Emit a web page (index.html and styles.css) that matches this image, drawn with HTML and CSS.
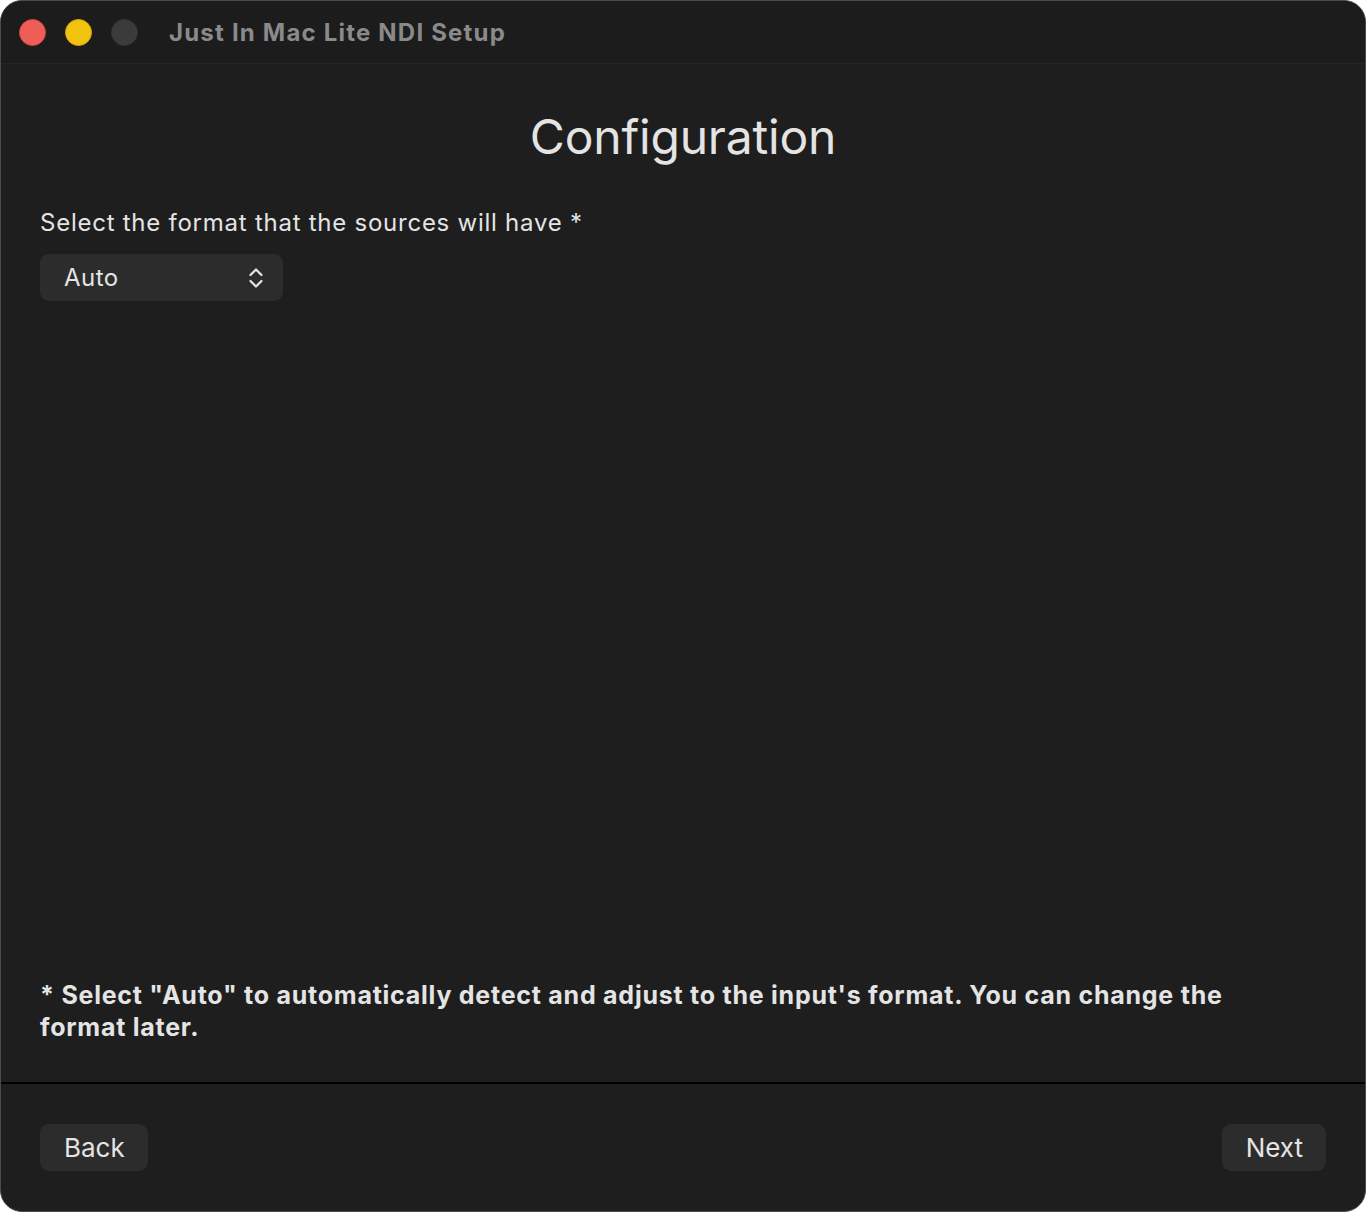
FILE: index.html
```html
<!DOCTYPE html>
<html>
<head>
<meta charset="utf-8">
<link rel="stylesheet" href="styles.css">
</head>
<body>
<div class="window">
  <div class="titlebar">
    <div class="lights">
      <span class="light red"></span>
      <span class="light yellow"></span>
      <span class="light gray"></span>
    </div>
    <div class="wtitle">Just In Mac Lite NDI Setup</div>
  </div>
  <div class="content">
    <h1 class="heading">Configuration</h1>
    <div class="label">Select the format that the sources will have *</div>
    <div class="select">
      <span>Auto</span>
      <svg class="chev" width="16" height="24" viewBox="0 0 16 24"><path d="M2.5 9 L8 3.5 L13.5 9 M2.5 15 L8 20.5 L13.5 15" fill="none" stroke="#e6e6e6" stroke-width="2.2" stroke-linecap="round" stroke-linejoin="round"/></svg>
    </div>
    <div class="spacer"></div>
    <p class="note">* Select "Auto" to automatically detect and adjust to the input's format. You can change the format later.</p>
  </div>
  <div class="footer">
    <div class="btn">Back</div>
    <div class="btn">Next</div>
  </div>
</div>
</body>
</html>
```
FILE: styles.css
```css
html, body { margin: 0; padding: 0; background: #ffffff; }
body { font-family: Inter, "Noto Sans", sans-serif; }
.window {
  width: 1366px; height: 1212px; box-sizing: border-box;
  background: #1e1e1e; border-radius: 22px; overflow: hidden;
  border: 1px solid #4a4a4a;
  display: flex; flex-direction: column;
}
.titlebar {
  height: 62px; flex: none; background: #1c1c1c;
  border-bottom: 1px solid #252525;
  display: flex; align-items: center;
}
.lights { display: flex; gap: 19px; padding-left: 18px; }
.light { width: 27px; height: 27px; border-radius: 50%; box-sizing: border-box; }
.red { background: #ee5e57; border: 1px solid #d0463f; }
.yellow { background: #f2c30e; border: 1px solid #d8a70b; }
.gray { background: #3b3b3b; border: 1px solid #353535; }
.wtitle { margin-left: 31px; color: #8a8a8a; font-weight: 700; font-size: 24px; letter-spacing: 1.2px; }
.content { flex: 1; display: flex; flex-direction: column; padding: 0 39px; }
.heading { margin: 43px 0 0; text-align: center; font-weight: 400; font-size: 48px; color: #e4e4e4; letter-spacing: -0.2px; line-height: 60px; }
.label { margin-top: 40px; font-size: 24px; color: #e4e4e4; line-height: 32px; letter-spacing: 0.75px; }
.select {
  margin-top: 15px; width: 243px; height: 47px; box-sizing: border-box;
  background: #2c2c2c; border-radius: 9px;
  display: flex; align-items: center; justify-content: space-between;
  padding: 0 19px 0 24px; font-size: 24px; color: #e4e4e4; letter-spacing: 0.5px;
}
.chev { display: block; }
.spacer { flex: 1; }
.note { margin: 0 0 39px; font-size: 25px; font-weight: 700; color: #e4e4e4; line-height: 32px; max-width: 1240px; letter-spacing: 0.75px; }
.footer {
  height: 129px; flex: none; box-sizing: border-box; border-top: 2px solid #000;
  display: flex; justify-content: space-between; align-items: flex-start;
  padding: 40px 39px 0;
}
.btn {
  height: 47px; box-sizing: border-box; padding: 0 23px 0 24px;
  background: #2c2c2c; border-radius: 9px; color: #e4e4e4; font-size: 26px;
  display: flex; align-items: center; letter-spacing: 0;
}
```
